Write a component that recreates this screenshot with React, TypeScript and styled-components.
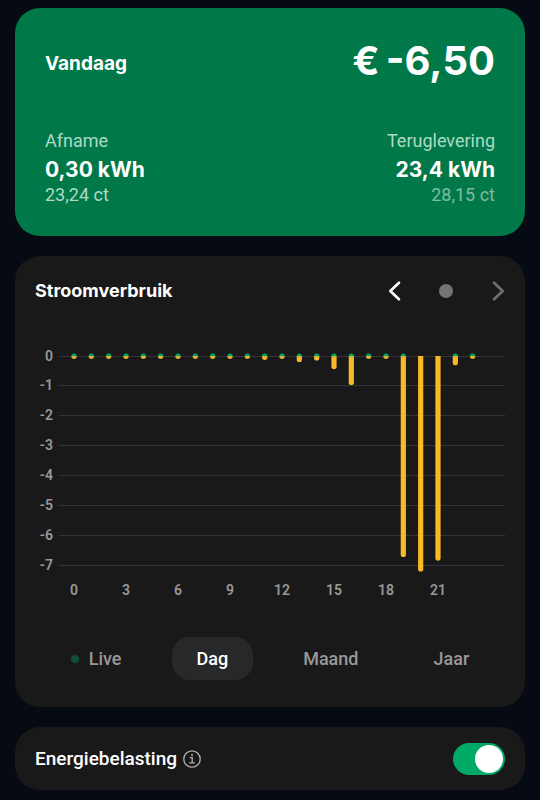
import React, { useState } from "react";
import styled, { createGlobalStyle } from "styled-components";

const GlobalStyle = createGlobalStyle`
  * { box-sizing: border-box; }
  body {
    margin: 0;
    background: #060b13;
    color: #fff;
    font-family: Roboto, sans-serif;
  }
  button { font: inherit; color: inherit; border: 0; background: none; padding: 0; cursor: pointer; }
  h2, p { margin: 0; }
`;

const Page = styled.main`
  display: flex;
  flex-direction: column;
  gap: 20px;
  padding: 8px 15px 10px;
`;

const Card = styled.section`
  background: #191919;
  border-radius: 25px;
  padding: 20px;
`;

const SummaryCard = styled(Card)`
  background: #007848;
  padding: 28px 30px 30px;
`;

const SpreadRow = styled.div`
  display: flex;
  align-items: center;
  justify-content: space-between;
`;

const SummaryTop = styled(SpreadRow)`
  align-items: flex-end;
  margin-bottom: 44px;
`;

const Title = styled.h2<{ $large?: boolean }>`
  font: 700 ${(p) => (p.$large ? 19 : 18)}px/30px Inter, sans-serif;
`;

const SummaryTitle = styled(Title)`
  padding-bottom: 7px;
`;

const Total = styled.p`
  font: 700 40px/50px Inter, sans-serif;
`;

const Reading = styled.div<{ $end?: boolean }>`
  text-align: ${(p) => (p.$end ? "right" : "left")};
`;

const Caption = styled.p<{ $dim?: boolean }>`
  font-size: 18px;
  line-height: 22px;
  color: ${(p) => (p.$dim ? "#80bba3" : "#addac5")};
`;

const Amount = styled.p`
  padding-top: 4px;
  font: 700 21px/28px Inter, sans-serif;
`;

const UsageCard = styled(Card)`
  padding-bottom: 27px;
`;

const Pager = styled.div`
  display: flex;
  align-items: center;
  gap: 38px;
`;

const PagerButton = styled.button`
  display: flex;
  align-items: center;
  justify-content: center;
  width: 14px;
  height: 30px;
  &:disabled { cursor: default; }
`;

const Dot = styled.span<{ $size: number; $color: string }>`
  width: ${(p) => p.$size}px;
  height: ${(p) => p.$size}px;
  border-radius: 50%;
  background: ${(p) => p.$color};
`;

const ChartSvg = styled.svg`
  display: block;
  width: 100%;
  height: auto;
  margin: 34px 0 32px;
  text {
    font: 600 14px Roboto, sans-serif;
    fill: #98989a;
  }
`;

const Tabs = styled.div`
  display: flex;
  justify-content: center;
  gap: 25px;
`;

const Tab = styled.button<{ $active: boolean }>`
  display: flex;
  align-items: center;
  gap: 10px;
  height: 43px;
  padding: 0 25px;
  border-radius: 18px;
  font-size: 18px;
  font-weight: 500;
  color: ${(p) => (p.$active ? "#fff" : "#98989a")};
  background: ${(p) => (p.$active ? "#27282a" : "transparent")};
`;

const TaxCard = styled(Card)`
  display: flex;
  align-items: center;
  justify-content: space-between;
  padding: 16px 20px 15px;
`;

const TaxName = styled.div`
  display: flex;
  align-items: center;
  gap: 6px;
  font-size: 19px;
  font-weight: 500;
  line-height: 32px;
`;

const InfoButton = styled.button`
  display: flex;
`;

const Switch = styled.input`
  appearance: none;
  display: flex;
  width: 52px;
  height: 32px;
  margin: 0;
  padding: 2px;
  border-radius: 16px;
  background: #4a4a4c;
  cursor: pointer;
  &::before {
    content: "";
    width: 28px;
    height: 28px;
    border-radius: 50%;
    background: #fff;
  }
  &:checked {
    justify-content: flex-end;
    background: #00a965;
  }
`;

const UNIT = 30;
const ZERO = 16;
const usage = [
  -0.02, -0.02, -0.02, -0.02, -0.02, -0.02, -0.02, -0.02, -0.02, -0.02, -0.02, -0.13,
  -0.02, -0.2, -0.15, -0.44, -0.97, -0.02, -0.02, -6.72, -7.2, -6.84, -0.31, -0.02,
];
const hoursWithoutIntake = [20, 21];
const barX = (hour: number) => 39 + (hour * 52) / 3;
const levelY = (value: number) => ZERO - (value * 209.5) / 7;

function UsageChart() {
  return (
    <ChartSvg viewBox={`0 0 470 ${ZERO + 8 * UNIT + 9}`} role="img" aria-label="Stroomverbruik per uur">
      {[0, -1, -2, -3, -4, -5, -6, -7].map((v) => (
        <g key={v}>
          <line x1="24" x2="470" y1={Math.floor(levelY(v)) + 0.5} y2={Math.floor(levelY(v)) + 0.5} stroke="#343438" />
          <text x="18" y={Math.floor(levelY(v)) + 5} textAnchor="end">{v}</text>
        </g>
      ))}
      {usage.map((v, hour) => {
        const x = barX(hour);
        const end = Math.max(levelY(v), ZERO + 2.8);
        return (
          <g key={hour}>
            <path
              d={`M${x - 2.6} ${ZERO}h5.2V${end - 2.6}a2.6 2.6 0 0 1 -5.2 0z`}
              fill="#f9b826"
            />
            {!hoursWithoutIntake.includes(hour) && (
              <path d={`M${x - 2.6} ${ZERO + 0.3}a2.6 2.8 0 0 1 5.2 0z`} fill="#00a965" />
            )}
          </g>
        );
      })}
      {[0, 3, 6, 9, 12, 15, 18, 21].map((hour) => (
        <text key={hour} x={barX(hour)} y="255" textAnchor="middle">{hour}</text>
      ))}
    </ChartSvg>
  );
}

function Chevron({ next = false }: { next?: boolean }) {
  return (
    <svg width="14" height="22" viewBox="0 0 14 22" fill="none" stroke={next ? "#6f6f70" : "#fff"} strokeWidth="2.6" strokeLinecap="round" strokeLinejoin="round">
      <path d={next ? "M3 2.7 11.7 11 3 19.3" : "M12 2.7 3.300 11 12 19.300"} />
    </svg>
  );
}

function InfoIcon() {
  return (
    <svg width="18" height="18" viewBox="0 0 18 18" fill="none" stroke="#b0b0b1" strokeWidth="1.3" strokeLinecap="round">
      <circle cx="9" cy="9" r="8.200" />
      <path d="M7.200 7.600h2v5M6.700 12.800h4.800" />
      <circle cx="9" cy="4.900" r="1" fill="#b0b0b1" stroke="none" />
    </svg>
  );
}

const periods = ["Live", "Dag", "Maand", "Jaar"];

export default function App() {
  const [period, setPeriod] = useState("Dag");
  const [tax, setTax] = useState(true);
  return (
    <>
      <GlobalStyle />
      <Page>
        <SummaryCard>
          <SummaryTop>
            <SummaryTitle $large>Vandaag</SummaryTitle>
            <Total>€&#8201;-6,50</Total>
          </SummaryTop>
          <SpreadRow>
            <Reading>
              <Caption>Afname</Caption>
              <Amount>0,30 kWh</Amount>
              <Caption>23,24 ct</Caption>
            </Reading>
            <Reading $end>
              <Caption>Teruglevering</Caption>
              <Amount>23,4 kWh</Amount>
              <Caption $dim>28,15 ct</Caption>
            </Reading>
          </SpreadRow>
        </SummaryCard>

        <UsageCard>
          <SpreadRow>
            <Title>Stroomverbruik</Title>
            <Pager>
              <PagerButton aria-label="Vorige"><Chevron /></PagerButton>
              <Dot $size={14} $color="#747475" />
              <PagerButton aria-label="Volgende" disabled><Chevron next /></PagerButton>
            </Pager>
          </SpreadRow>
          <UsageChart />
          <Tabs role="tablist">
            {periods.map((name) => (
              <Tab key={name} role="tab" aria-selected={period === name} $active={period === name} onClick={() => setPeriod(name)}>
                {name === "Live" && <Dot $size={8} $color="#124d35" />}
                {name}
              </Tab>
            ))}
          </Tabs>
        </UsageCard>

        <TaxCard>
          <TaxName>
            <label htmlFor="tax">Energiebelasting</label>
            <InfoButton aria-label="Uitleg energiebelasting"><InfoIcon /></InfoButton>
          </TaxName>
          <Switch id="tax" type="checkbox" role="switch" checked={tax} onChange={() => setTax(!tax)} />
        </TaxCard>
      </Page>
    </>
  );
}
